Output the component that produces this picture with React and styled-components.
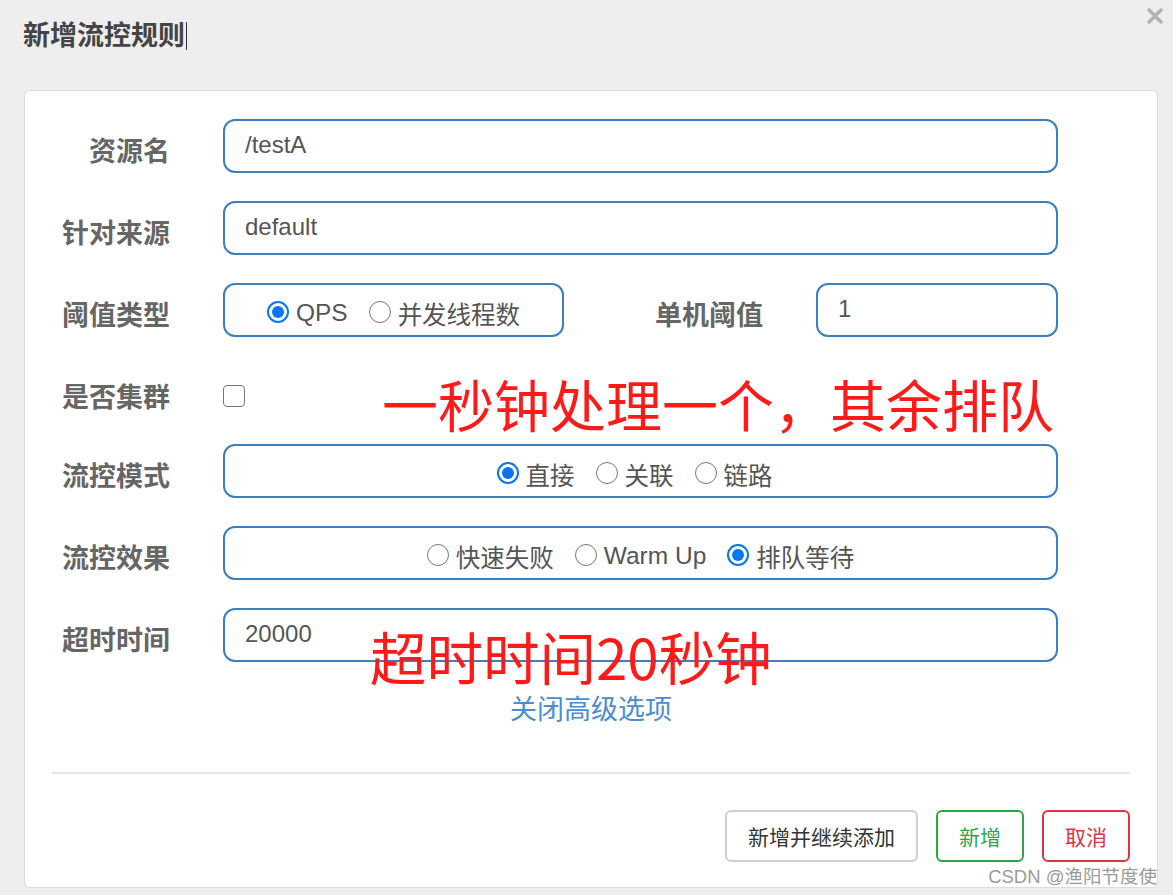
import React from "react";
import styled, { createGlobalStyle } from "styled-components";

const Global = createGlobalStyle`
  html, body { margin: 0; padding: 0; background: #eeeeee; }
  body { font-family: "Liberation Sans", "Noto Sans CJK SC", sans-serif; }
  * { box-sizing: border-box; }
`;

const Page = styled.div`
  position: relative;
  width: 1173px;
  height: 895px;
  background: #eeeeee;
  padding: 0 15px 0 24px;
  overflow: hidden;
`;

const Header = styled.div`
  height: 90px;
  display: flex;
  align-items: flex-start;
  justify-content: space-between;
`;

const Title = styled.h4`
  margin: 18px 0 0 -1px;
  font-size: 27px;
  line-height: 36px;
  font-weight: 700;
  color: #444;
  display: flex;
  align-items: center;
`;

const Caret = styled.span`
  display: inline-block;
  width: 1px;
  height: 28px;
  background: #333;
  margin-left: 1px;
`;

const Close = styled.button`
  border: 0;
  background: transparent;
  padding: 0;
  margin: 6px -7px 0 0;
  width: 20px;
  height: 20px;
  cursor: pointer;
  display: flex;
`;

const Card = styled.div`
  position: relative;
  height: 798px;
  background: #fff;
  border: 1px solid #dcdcdc;
  border-radius: 6px;
  padding-top: 28px;
  display: flex;
  flex-direction: column;
`;

const Form = styled.div`
  display: flex;
  flex-direction: column;
  gap: 28px;
  padding-right: 99px;
`;

const Row = styled.div`
  display: grid;
  grid-template-columns: 145px 1fr;
  column-gap: 53px;
  height: ${(p) => p.$h || 54}px;
`;

const Label = styled.label`
  display: flex;
  align-items: center;
  justify-content: flex-end;
  padding-top: ${(p) => p.$pt ?? 6}px;
  font-size: 27px;
  font-weight: 700;
  color: #666;
  white-space: nowrap;
`;

const Input = styled.div`
  height: 54px;
  border: 2px solid #3d7ebf;
  border-radius: 12px;
  padding: 0 20px;
  display: flex;
  align-items: center;
  padding-bottom: 2px;
  font-size: 24px;
  color: #555;
`;

const Split = styled.div`
  display: grid;
  grid-template-columns: 341px 1fr 242px;
  column-gap: 53px;
`;

const RadioBox = styled.div`
  height: 54px;
  border: 2px solid #3d7ebf;
  border-radius: 12px;
  display: flex;
  align-items: center;
  justify-content: center;
  gap: 21px;
  padding: 6px ${(p) => p.$pr || 0}px 0 0;
`;

const RadioItem = styled.span`
  display: flex;
  align-items: center;
  gap: 7px;
  font-size: 24.5px;
  color: #555;
  white-space: nowrap;
`;

const Dot = styled.span`
  width: 22px;
  height: 22px;
  border-radius: 50%;
  flex: none;
  margin-top: -3px;
  border: ${(p) => (p.$on ? "2px solid #0b74f0" : "1.5px solid #777")};
  background: #fff;
  display: flex;
  align-items: center;
  justify-content: center;
  &::after {
    content: "";
    width: 12px;
    height: 12px;
    border-radius: 50%;
    background: ${(p) => (p.$on ? "#0b74f0" : "transparent")};
  }
`;

const CheckCell = styled.div`
  display: flex;
  align-items: center;
  padding-top: 11px;
`;

const Check = styled.span`
  width: 22px;
  height: 22px;
  border: 1.5px solid #767676;
  border-radius: 4px;
  background: #fff;
`;

const Note = styled.div`
  position: absolute;
  left: ${(p) => p.$x}px;
  top: ${(p) => p.$y}px;
  font-family: "Noto Sans CJK SC", sans-serif;
  font-size: ${(p) => p.$fs || 56}px;
  line-height: 56px;
  color: #ff1a1a;
  white-space: nowrap;
  pointer-events: none;
`;

const Toggle = styled.a`
  align-self: center;
  margin-top: 31px;
  font-size: 27px;
  line-height: 34px;
  color: #4a8dd0;
  text-decoration: none;
  cursor: pointer;
`;

const Divider = styled.hr`
  margin: 45px 27px 0 27px;
  border: 0;
  border-top: 2px solid #e6e6e6;
`;

const Footer = styled.div`
  display: flex;
  justify-content: flex-end;
  gap: 18px;
  padding: 36px 27px 0 0;
`;

const tones = {
  default: { b: "#cfcfcf", c: "#333" },
  success: { b: "#2aa745", c: "#28a745" },
  danger: { b: "#dc3545", c: "#dc3545" },
};

const Button = styled.button`
  height: 52px;
  padding: 0 21px;
  background: #fff;
  border: 2px solid ${(p) => tones[p.$tone].b};
  color: ${(p) => tones[p.$tone].c};
  border-radius: 6px;
  font-family: "Noto Sans CJK SC", sans-serif;
  font-size: 21px;
  cursor: pointer;
`;

const Watermark = styled.div`
  position: absolute;
  right: 16px;
  bottom: 7px;
  font-family: "Liberation Sans", "Noto Sans CJK SC", sans-serif;
  font-size: 18.5px;
  color: #9a9a9a;
  white-space: nowrap;
`;

const Radio = ({ on, children }) => (
  <RadioItem>
    <Dot $on={on} />
    {children}
  </RadioItem>
);

export default function App() {
  return (
    <>
      <Global />
      <Page>
        <Header>
          <Title>
            新增流控规则
            <Caret />
          </Title>
          <Close aria-label="close">
            <svg width="20" height="20" viewBox="0 0 20 20">
              <path
                d="M3 3 L17 17 M17 3 L3 17"
                stroke="#b3b3b3"
                strokeWidth="3.6"
                strokeLinecap="butt"
              />
            </svg>
          </Close>
        </Header>
        <Card>
          <Form>
            <Row>
              <Label>资源名</Label>
              <Input>/testA</Input>
            </Row>
            <Row>
              <Label>针对来源</Label>
              <Input>default</Input>
            </Row>
            <Row>
              <Label>阈值类型</Label>
              <Split>
                <RadioBox>
                  <Radio on>QPS</Radio>
                  <Radio>并发线程数</Radio>
                </RadioBox>
                <Label>单机阈值</Label>
                <Input>1</Input>
              </Split>
            </Row>
            <Row $h={51}>
              <Label $pt={10}>是否集群</Label>
              <CheckCell>
                <Check />
              </CheckCell>
            </Row>
            <Row>
              <Label>流控模式</Label>
              <RadioBox $pr={12}>
                <Radio on>直接</Radio>
                <Radio>关联</Radio>
                <Radio>链路</Radio>
              </RadioBox>
            </Row>
            <Row>
              <Label>流控效果</Label>
              <RadioBox>
                <Radio>快速失败</Radio>
                <Radio>Warm Up</Radio>
                <Radio on>排队等待</Radio>
              </RadioBox>
            </Row>
            <Row>
              <Label>超时时间</Label>
              <Input>20000</Input>
            </Row>
          </Form>
          <Toggle>关闭高级选项</Toggle>
          <Divider />
          <Footer>
            <Button $tone="default">新增并继续添加</Button>
            <Button $tone="success">新增</Button>
            <Button $tone="danger">取消</Button>
          </Footer>
          <Note $x={357} $y={284}>一秒钟处理一个，其余排队</Note>
          <Note $x={345} $y={536} $fs={56.5}>超时时间20秒钟</Note>
        </Card>
        <Watermark>CSDN @渔阳节度使</Watermark>
      </Page>
    </>
  );
}
